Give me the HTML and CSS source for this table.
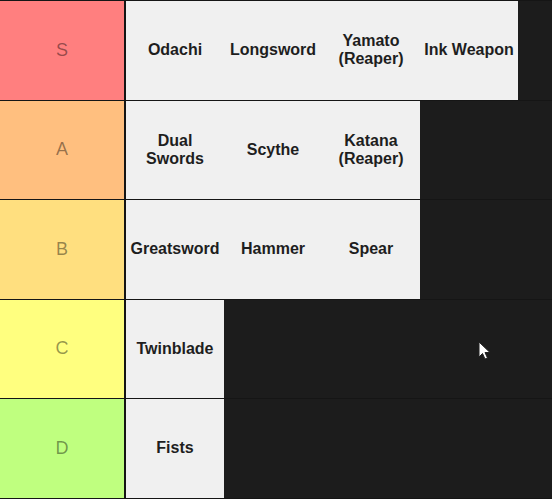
FILE: index.html
```html
<!DOCTYPE html>
<html lang="en">
<head>
  <meta charset="UTF-8" />
  <meta name="viewport" content="width=device-width, initial-scale=1.0" />
  <title>Weapon Tier List</title>
  <link rel="stylesheet" href="styles.css">
</head>
<body>
  <main class="tierlist">
    <!-- S tier -->
    <div class="row">
      <div class="label tier-s">S</div>
      <div class="items">
        <div class="item">Odachi</div>
        <div class="item">Longsword</div>
        <div class="item">Yamato<br>(Reaper)</div>
        <div class="item">Ink Weapon</div>
      </div>
    </div>

    <!-- A tier -->
    <div class="row">
      <div class="label tier-a">A</div>
      <div class="items">
        <div class="item">Dual<br>Swords</div>
        <div class="item">Scythe</div>
        <div class="item">Katana<br>(Reaper)</div>
      </div>
    </div>

    <!-- B tier -->
    <div class="row">
      <div class="label tier-b">B</div>
      <div class="items">
        <div class="item">Greatsword</div>
        <div class="item">Hammer</div>
        <div class="item">Spear</div>
      </div>
    </div>

    <!-- C tier -->
    <div class="row">
      <div class="label tier-c">C</div>
      <div class="items">
        <div class="item">Twinblade</div>
      </div>
    </div>

    <!-- D tier -->
    <div class="row">
      <div class="label tier-d">D</div>
      <div class="items">
        <div class="item">Fists</div>
      </div>
    </div>

    <!-- mouse pointer captured in the shot -->
    <svg class="cursor" width="14" height="20" viewBox="0 0 14 20">
      <path d="M1 1 L1 16 L4.5 12.5 L7 18 L9.5 17 L7 11.5 L12 11.5 Z" fill="#fff" stroke="#222" stroke-width="1"/>
    </svg>
  </main>
</body>
</html>
```

FILE: styles.css
```css
:root {
  --line-color: #151515;
  --empty-color: #1c1c1c;
  --item-color: #f0f0f0;
}
* {
  margin: 0;
  padding: 0;
  box-sizing: border-box;
}
body {
  background-color: var(--empty-color);
  font-family: 'Liberation Sans', Arial, sans-serif;
  width: 552px;
  height: 499px;
  overflow: hidden;
}
.tierlist {
  position: relative;
  display: flex;
  flex-direction: column;
  border-top: 1px solid var(--line-color);
}
.row {
  display: flex;
  height: 99.5px;
  border-bottom: 1px solid var(--line-color);
}
.label {
  width: 126px;
  flex-shrink: 0;
  display: flex;
  align-items: center;
  justify-content: center;
  border-right: 2px solid var(--line-color);
  font-size: 18px;
  color: rgba(0, 0, 0, 0.42);
}
.tier-s { background-color: #ff7f7f; }
.tier-a { background-color: #ffbf7f; }
.tier-b { background-color: #ffdf7f; }
.tier-c { background-color: #ffff7f; }
.tier-d { background-color: #bfff7f; }
.items {
  display: flex;
}
.item {
  width: 98px;
  display: flex;
  align-items: center;
  justify-content: center;
  text-align: center;
  background-color: var(--item-color);
  font-weight: bold;
  font-size: 16px;
  line-height: 18px;
  color: #1e1e1e;
}
/* pointer floats over the empty area */
.cursor {
  position: absolute;
  left: 478px;
  top: 340px;
}
```
